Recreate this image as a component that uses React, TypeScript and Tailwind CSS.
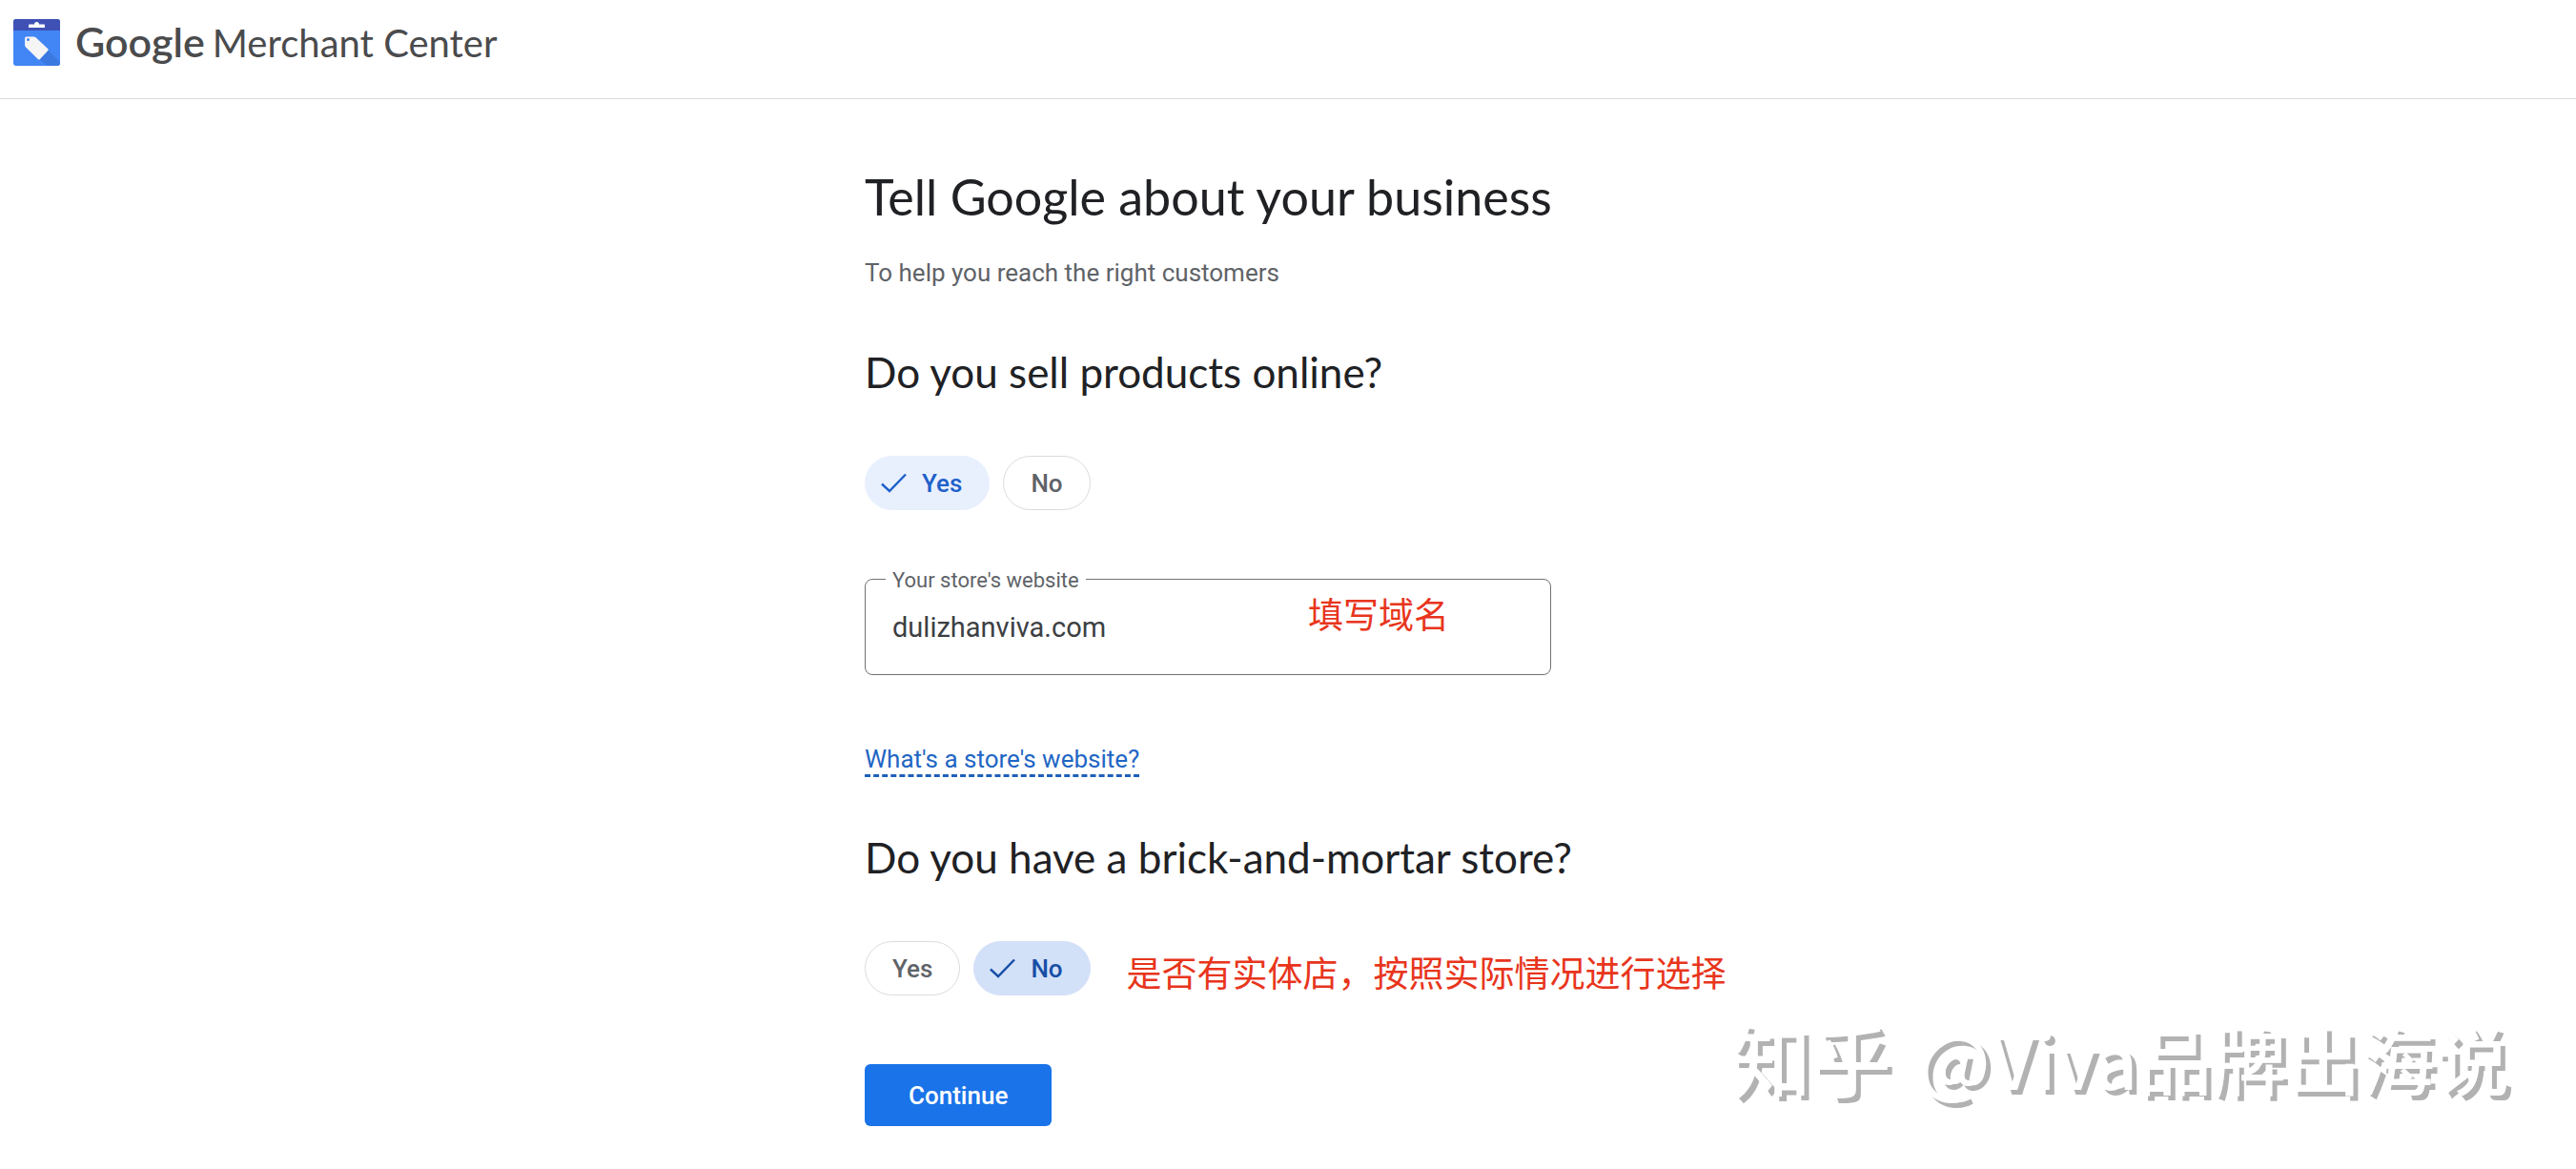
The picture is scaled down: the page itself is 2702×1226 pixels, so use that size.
import { useState } from "react";
import clsx from "clsx";

function MerchantLogo() {
    return (
        <svg width="49" height="49" viewBox="0 0 49 49" aria-hidden="true">
            <rect width="49" height="49" rx="3" fill="#4285f4" />
            <path d="M36.5 33 L49 45 V46 a3 3 0 0 1 -3 3 H36 L27 42 Z" fill="#3b78e0" />
            <path d="M0 12 V3 a3 3 0 0 1 3 -3 H46 a3 3 0 0 1 3 3 V12 Z" fill="#3f51b5" />
            <path d="M16 9 V6.500 a1 1 0 0 1 1 -1 h5 a2.500 2.500 0 0 1 5 0 h5 a1 1 0 0 1 1 1 V9 Z" fill="#fff" />
            <path d="M13.500 18.500 H21.500 a3 3 0 0 1 2 .8 L36.300 31.200 a1.300 1.300 0 0 1 0 1.900 L28 42 a1.500 1.500 0 0 1 -2.200 0 L13 29.500 a3 3 0 0 1 -.9 -2 V20 a1.500 1.500 0 0 1 1.400 -1.500 Z" fill="#f5f5f5" />
            <circle cx="15.500" cy="21.500" r="1.500" fill="#4285f4" />
        </svg>
    );
}

function CheckIcon() {
    return (
        <svg width="27" height="21" viewBox="0 0 27 21" fill="none" stroke="currentColor" strokeWidth="2.400" aria-hidden="true">
            <path d="M1 11.500 L9 19 L26 1.500" />
        </svg>
    );
}

type ChoiceProps = {
    label: string;
    selected: boolean;
    selectedClass: string;
    onSelect: () => void;
};

function Choice({ label, selected, selectedClass, onSelect }: ChoiceProps) {
    return (
        <button
            type="button"
            aria-pressed={selected}
            onClick={onSelect}
            className={clsx(
                "flex h-[57px] items-center gap-4 rounded-full border font-['Roboto',sans-serif] text-[26px] leading-8 font-medium",
                selected ? "pr-7 pl-4" : "border-[#dadce0] px-7 text-[#5f6368]",
                selected && selectedClass,
            )}
        >
            {selected && <CheckIcon />}
            {label}
        </button>
    );
}

export default function App() {
    const [online, setOnline] = useState(true);
    const [physical, setPhysical] = useState(false);
    const [website, setWebsite] = useState("dulizhanviva.com");

    const blue = "border-[#e8f0fe] bg-[#e8f0fe] text-[#1f60c9]";
    const darkBlue = "border-[#d2e0f8] bg-[#d2e0f8] text-[#174ea6]";

    return (
        <div className="relative min-h-screen bg-white font-['Lato',sans-serif] text-[#202124] [font-variant-ligatures:none]">
            <header className="flex h-[104px] items-start gap-4 border-b border-[#dadce0] px-3.5 pt-5">
                <MerchantLogo />
                <div className="-mt-0.5 flex items-baseline gap-2 text-[40px] leading-[52px] text-[#4a4b4d]">
                    <span className="text-[43px] font-semibold">Google</span>
                    <span>Merchant Center</span>
                </div>
            </header>

            <main className="mx-auto flex max-w-[888px] flex-col items-start pt-[70px] pb-11">
                <h1 className="text-[52px] leading-16">Tell Google about your business</h1>
                <p className="mt-8 font-['Roboto',sans-serif] text-[26px] leading-8 text-[#5f6368]">
                    To help you reach the right customers
                </p>

                <h2 className="mt-[60px] text-[44px] leading-14">Do you sell products online?</h2>
                <div className="mt-[60px] flex gap-3.5">
                    <Choice label="Yes" selected={online} selectedClass={blue} onSelect={() => setOnline(true)} />
                    <Choice label="No" selected={!online} selectedClass={blue} onSelect={() => setOnline(false)} />
                </div>

                <div className="relative mt-[72px] w-full max-w-[720px] font-['Roboto',sans-serif]">
                    <label htmlFor="website" className="absolute -top-3 left-[22px] bg-white px-[7px] text-[22px] leading-7 text-[#5f6368]">
                        Your store's website
                    </label>
                    <input
                        id="website"
                        type="text"
                        value={website}
                        onChange={(e) => setWebsite(e.target.value)}
                        className="block h-[101px] w-full rounded-lg border border-[#6f7276] px-7 text-[29px] text-[#3c4043]"
                    />
                    <span className="pointer-events-none absolute top-3 left-[465px] font-['Noto_Sans_CJK_SC',sans-serif] text-[37px] leading-12 whitespace-nowrap text-[#e8351c]">
                        填写域名
                    </span>
                </div>

                <a href="#website" className="mt-[72px] border-b-3 border-dashed border-[#1f60b9] font-['Roboto',sans-serif] text-[26px] leading-8 text-[#1f66c4]">
                    What's a store's website?
                </a>

                <h2 className="mt-14 text-[44px] leading-14">Do you have a brick-and-mortar store?</h2>
                <div className="mt-[60px] flex gap-3.5">
                    <Choice label="Yes" selected={physical} selectedClass={darkBlue} onSelect={() => setPhysical(true)} />
                    <Choice label="No" selected={!physical} selectedClass={darkBlue} onSelect={() => setPhysical(false)} />
                    <span className="ml-6 pt-2 font-['Noto_Sans_CJK_SC',sans-serif] text-[37px] leading-12 whitespace-nowrap text-[#e8351c]">
                        是否有实体店，按照实际情况进行选择
                    </span>
                </div>

                <button type="button" className="mt-[72px] h-[65px] rounded-md bg-[#1a73e8] px-[46px] font-['Roboto',sans-serif] text-[26px] leading-8 font-medium text-white">
                    Continue
                </button>
            </main>

            <div className="pointer-events-none absolute right-[70px] bottom-[67px] flex items-center gap-7 font-['Noto_Sans_CJK_SC',sans-serif] text-[78px] leading-[100px] whitespace-nowrap text-white [text-shadow:5px_5px_0_#b2b2b2]">
                <span className="text-[84px] font-medium">知乎</span>
                <span className="font-medium">@Viva品牌出海说</span>
            </div>
        </div>
    );
}
